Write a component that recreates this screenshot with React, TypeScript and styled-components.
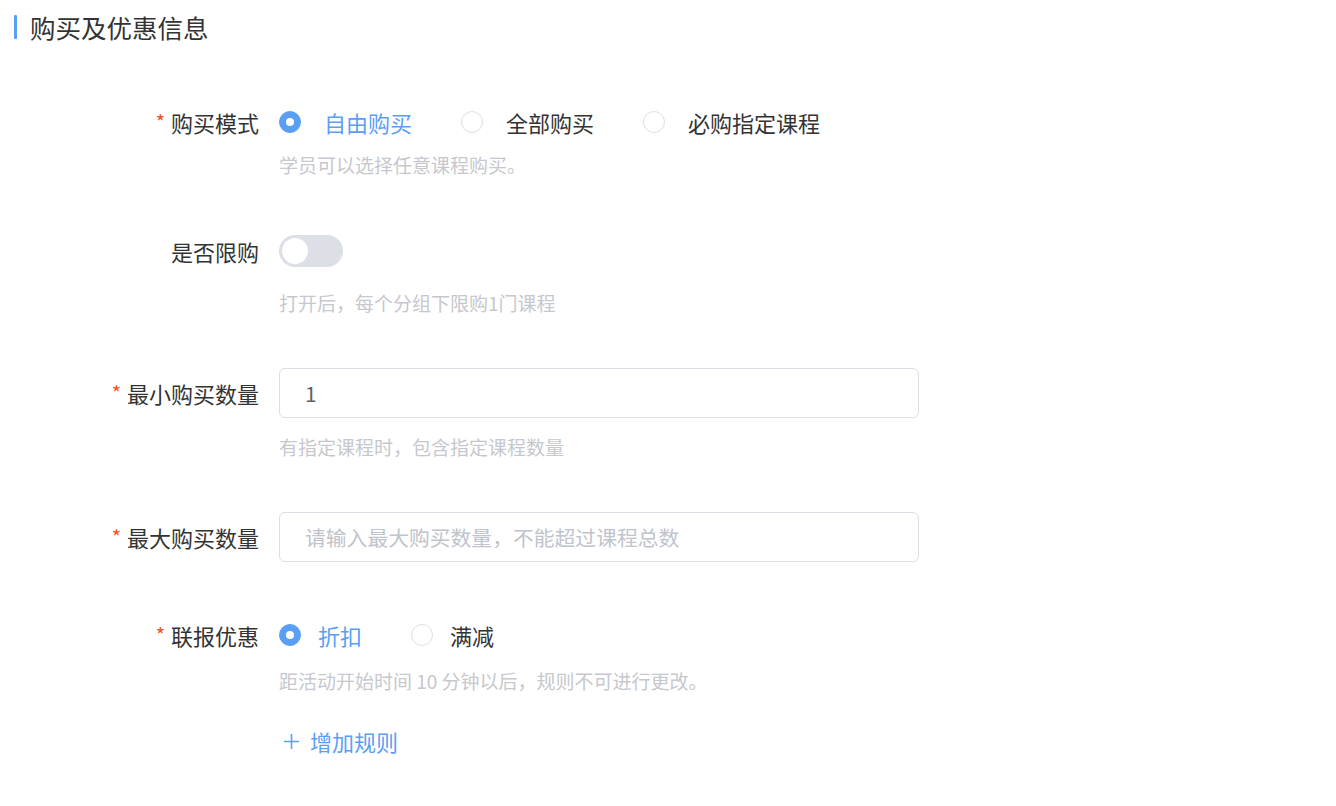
import React, { useState } from "react";
import styled, { createGlobalStyle } from "styled-components";

const GlobalStyle = createGlobalStyle`
  body {
    margin: 0;
    background: #ffffff;
    font-family: "Noto Sans CJK SC", "Noto Sans", sans-serif;
  }
`;

const Page = styled.div`
  width: 1336px;
  min-height: 806px;
  background: #ffffff;
`;

const Header = styled.div`
  display: flex;
  align-items: center;
  padding: 12px 0 0 14px;
  height: 30px;
`;

const Bar = styled.div`
  width: 3px;
  height: 24px;
  border-radius: 1px;
  background: #5a9ff6;
  margin-right: 13px;
`;

const Title = styled.div`
  font-size: 25.5px;
  line-height: 30px;
  color: #333333;
`;

const Form = styled.div`
  margin-top: 55px;
  display: flex;
  flex-direction: column;
`;

const Item = styled.div<{ $space: number }>`
  display: grid;
  grid-template-columns: 279px 640px;
  margin-bottom: ${(p) => p.$space}px;
`;

const Label = styled.div`
  height: 50px;
  display: flex;
  align-items: center;
  justify-content: flex-end;
  padding-right: 20px;
  font-size: 22px;
  color: #333333;
  white-space: nowrap;
`;

const Star = styled.span`
  color: #f4511e;
  font-size: 20px;
  margin-right: 6px;
  position: relative;
  top: -1px;
`;

const Content = styled.div`
  display: flex;
  flex-direction: column;
`;

const Control = styled.div`
  height: 50px;
  display: flex;
  align-items: center;
`;

const Hint = styled.div<{ $top: number }>`
  margin-top: ${(p) => p.$top}px;
  font-size: 19px;
  line-height: 28px;
  color: #c6c8cd;
  white-space: nowrap;
`;

const RadioGroup = styled.div`
  display: flex;
  align-items: center;
  gap: 49px;
`;

const RadioOption = styled.label<{ $gap: number }>`
  display: flex;
  align-items: center;
  gap: ${(p) => p.$gap}px;
  cursor: pointer;
`;

const Dot = styled.span<{ $on: boolean }>`
  width: 22px;
  height: 22px;
  box-sizing: border-box;
  border-radius: 50%;
  background: ${(p) => (p.$on ? "#5a9ff6" : "#ffffff")};
  border: 1px solid ${(p) => (p.$on ? "#5a9ff6" : "#dcdfe6")};
  display: flex;
  align-items: center;
  justify-content: center;
  &::after {
    content: "";
    width: 8px;
    height: 8px;
    border-radius: 50%;
    background: #ffffff;
    display: ${(p) => (p.$on ? "block" : "none")};
  }
`;

const RadioText = styled.span<{ $on: boolean }>`
  font-size: 22px;
  color: ${(p) => (p.$on ? "#5a9ff6" : "#333333")};
  white-space: nowrap;
`;

const Switch = styled.button<{ $on: boolean }>`
  width: 64px;
  height: 32px;
  border: none;
  padding: 0;
  border-radius: 16px;
  background: ${(p) => (p.$on ? "#5a9ff6" : "#dcdfe6")};
  position: relative;
  cursor: pointer;
  &::after {
    content: "";
    position: absolute;
    top: 3px;
    left: ${(p) => (p.$on ? "35px" : "3px")};
    width: 26px;
    height: 26px;
    border-radius: 50%;
    background: #ffffff;
  }
`;

const Input = styled.input`
  width: 640px;
  height: 50px;
  box-sizing: border-box;
  border: 1px solid #dcdfe6;
  border-radius: 6px;
  padding: 0 25px;
  font-family: "Noto Sans CJK SC", "Noto Sans", sans-serif;
  font-size: 20.8px;
  color: #606266;
  outline: none;
  &::placeholder {
    color: #c0c4cc;
  }
`;

const AddRule = styled.button`
  margin-top: 32px;
  align-self: flex-start;
  display: flex;
  align-items: center;
  gap: 10px;
  padding: 0 0 0 4px;
  border: none;
  background: none;
  font-family: "Noto Sans CJK SC", "Noto Sans", sans-serif;
  font-size: 22px;
  line-height: 28px;
  color: #5a9ff6;
  cursor: pointer;
`;

type Opt = { label: string };

const Radios = ({
  options,
  value,
  gap,
  onChange,
}: {
  options: Opt[];
  value: number;
  gap: number;
  onChange: (i: number) => void;
}) => (
  <RadioGroup>
    {options.map((o, i) => (
      <RadioOption key={o.label} $gap={gap} onClick={() => onChange(i)}>
        <Dot $on={i === value} />
        <RadioText $on={i === value}>{o.label}</RadioText>
      </RadioOption>
    ))}
  </RadioGroup>
);

export default function App() {
  const [mode, setMode] = useState(0);
  const [limit, setLimit] = useState(false);
  const [discount, setDiscount] = useState(0);

  return (
    <Page>
      <GlobalStyle />
      <Header>
        <Bar />
        <Title>购买及优惠信息</Title>
      </Header>
      <Form>
        <Item $space={47}>
          <Label>
            <Star>*</Star>购买模式
          </Label>
          <Content>
            <Control>
              <Radios
                options={[
                  { label: "自由购买" },
                  { label: "全部购买" },
                  { label: "必购指定课程" },
                ]}
                value={mode}
                gap={23}
                onChange={setMode}
              />
            </Control>
            <Hint $top={4}>学员可以选择任意课程购买。</Hint>
          </Content>
        </Item>

        <Item $space={51}>
          <Label>是否限购</Label>
          <Content>
            <Control>
              <Switch $on={limit} onClick={() => setLimit(!limit)} />
            </Control>
            <Hint $top={13}>打开后，每个分组下限购1门课程</Hint>
          </Content>
        </Item>

        <Item $space={51}>
          <Label>
            <Star>*</Star>最小购买数量
          </Label>
          <Content>
            <Control>
              <Input defaultValue="1" />
            </Control>
            <Hint $top={15}>有指定课程时，包含指定课程数量</Hint>
          </Content>
        </Item>

        <Item $space={48}>
          <Label>
            <Star>*</Star>最大购买数量
          </Label>
          <Content>
            <Control>
              <Input placeholder="请输入最大购买数量，不能超过课程总数" />
            </Control>
          </Content>
        </Item>

        <Item $space={40}>
          <Label>
            <Star>*</Star>联报优惠
          </Label>
          <Content>
            <Control>
              <Radios
                options={[{ label: "折扣" }, { label: "满减" }]}
                value={discount}
                gap={17}
                onChange={setDiscount}
              />
            </Control>
            <Hint $top={7}>距活动开始时间 10 分钟以后，规则不可进行更改。</Hint>
            <AddRule>
              <svg width="17" height="17" viewBox="0 0 17 17">
                <path d="M8.5 1v15M1 8.5h15" stroke="#5a9ff6" strokeWidth="1.6" fill="none" />
              </svg>
              增加规则
            </AddRule>
          </Content>
        </Item>
      </Form>
    </Page>
  );
}
